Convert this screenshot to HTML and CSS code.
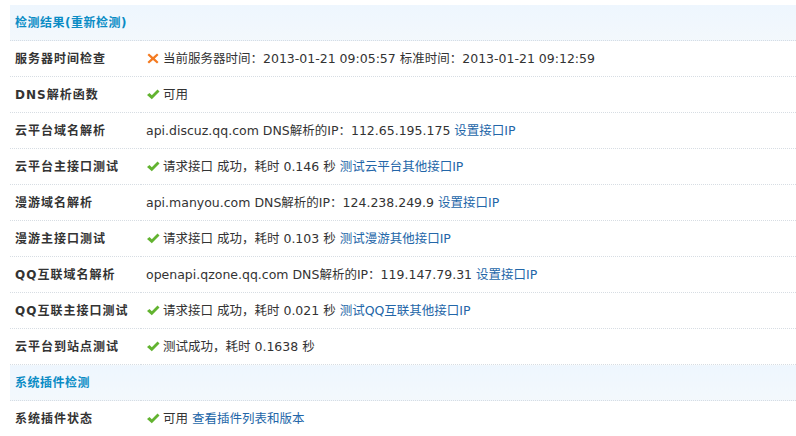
FILE: index.html
```html
<!DOCTYPE html>
<html lang="zh-CN">
<head>
    <meta charset="UTF-8">
    <title>云平台诊断工具</title>
    <link rel="stylesheet" href="styles.css">
</head>
<body>
    <table class="tb">
        <tr class="partition">
            <th colspan="2">检测结果(<a href="#">重新检测</a>)</th>
        </tr>
        <tr>
            <td class="label">服务器时间检查</td>
            <td><svg class="ico" viewBox="0 0 14 14"><path d="M3 2.5 L7 6 L11 2.5 L12.5 4 L8.8 7.5 L12.5 11 L11 12.5 L7 9 L3 12.5 L1.5 11 L5.2 7.5 L1.5 4 Z" fill="#f47a20"/></svg>当前服务器时间：2013-01-21 09:05:57 标准时间：2013-01-21 09:12:59</td>
        </tr>
        <tr>
            <td class="label">DNS解析函数</td>
            <td><svg class="ico" viewBox="0 0 14 14"><path d="M1 8 L3.5 6 L5.8 8.3 L11.5 2.5 L13.5 4.5 L5.8 12.3 Z" fill="#62b330"/></svg>可用</td>
        </tr>
        <tr>
            <td class="label">云平台域名解析</td>
            <td>api.discuz.qq.com DNS解析的IP：112.65.195.175 <a href="#">设置接口IP</a></td>
        </tr>
        <tr>
            <td class="label">云平台主接口测试</td>
            <td><svg class="ico" viewBox="0 0 14 14"><path d="M1 8 L3.5 6 L5.8 8.3 L11.5 2.5 L13.5 4.5 L5.8 12.3 Z" fill="#62b330"/></svg>请求接口 成功，耗时 0.146 秒 <a href="#">测试云平台其他接口IP</a></td>
        </tr>
        <tr>
            <td class="label">漫游域名解析</td>
            <td>api.manyou.com DNS解析的IP：124.238.249.9 <a href="#">设置接口IP</a></td>
        </tr>
        <tr>
            <td class="label">漫游主接口测试</td>
            <td><svg class="ico" viewBox="0 0 14 14"><path d="M1 8 L3.5 6 L5.8 8.3 L11.5 2.5 L13.5 4.5 L5.8 12.3 Z" fill="#62b330"/></svg>请求接口 成功，耗时 0.103 秒 <a href="#">测试漫游其他接口IP</a></td>
        </tr>
        <tr>
            <td class="label">QQ互联域名解析</td>
            <td>openapi.qzone.qq.com DNS解析的IP：119.147.79.31 <a href="#">设置接口IP</a></td>
        </tr>
        <tr>
            <td class="label">QQ互联主接口测试</td>
            <td><svg class="ico" viewBox="0 0 14 14"><path d="M1 8 L3.5 6 L5.8 8.3 L11.5 2.5 L13.5 4.5 L5.8 12.3 Z" fill="#62b330"/></svg>请求接口 成功，耗时 0.021 秒 <a href="#">测试QQ互联其他接口IP</a></td>
        </tr>
        <tr>
            <td class="label">云平台到站点测试</td>
            <td><svg class="ico" viewBox="0 0 14 14"><path d="M1 8 L3.5 6 L5.8 8.3 L11.5 2.5 L13.5 4.5 L5.8 12.3 Z" fill="#62b330"/></svg>测试成功，耗时 0.1638 秒</td>
        </tr>
        <tr class="partition">
            <th colspan="2">系统插件检测</th>
        </tr>
        <tr>
            <td class="label">系统插件状态</td>
            <td><svg class="ico" viewBox="0 0 14 14"><path d="M1 8 L3.5 6 L5.8 8.3 L11.5 2.5 L13.5 4.5 L5.8 12.3 Z" fill="#62b330"/></svg>可用 <a href="#">查看插件列表和版本</a></td>
        </tr>
    </table>
</body>
</html>
```

FILE: styles.css
```css
body {
    margin: 0;
    padding: 5px 0 0 10px;
    background: #fff;
    font-family: "DejaVu Sans", "Noto Sans CJK SC", sans-serif;
    font-size: 12.5px;
    color: #333;
}
a {
    color: #2366a8;
    text-decoration: none;
}
.tb {
    width: 786px;
    border-collapse: collapse;
}
.tb td, .tb th {
    height: 33px;
    padding: 0 5px 2px;
    border-bottom: 1px dotted #d7dde3;
    text-align: left;
    vertical-align: middle;
    white-space: nowrap;
}
.partition th {
    background: linear-gradient(#eef6fe, #f3f8fc);
    color: #0a8cc5;
    font-size: 12px;
    font-weight: bold;
    letter-spacing: 0.5px;
}
.partition th a {
    color: #0a8cc5;
}
.label {
    width: 121px;
    font-size: 12px;
    font-weight: bold;
    letter-spacing: 1px;
    color: #333;
}
.ico {
    width: 14px;
    height: 14px;
    vertical-align: -2px;
    margin-right: 3px;
}
```
